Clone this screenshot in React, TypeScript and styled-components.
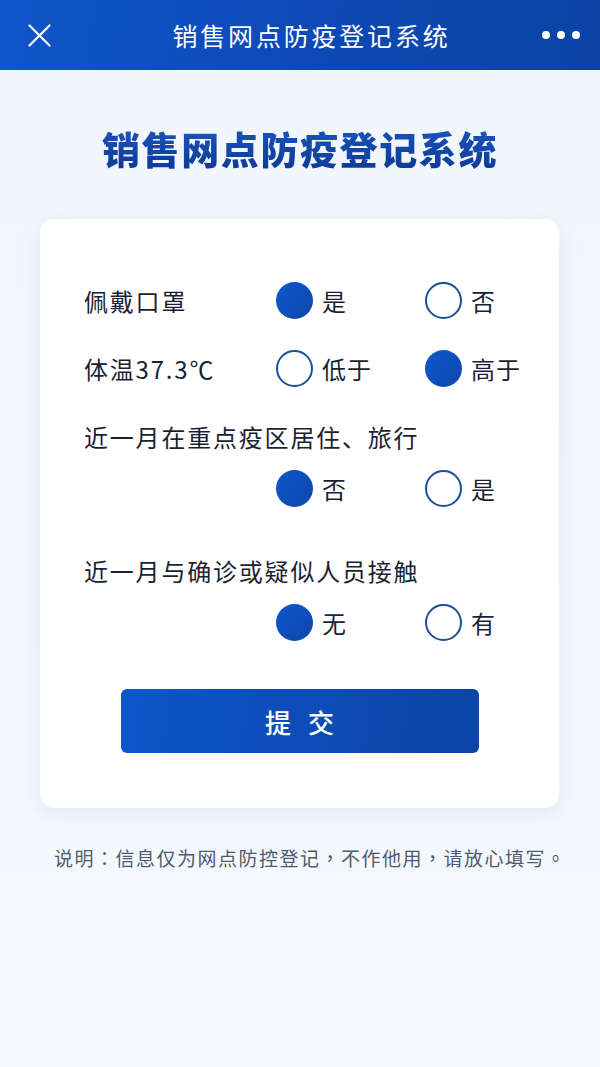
import React, { useState } from 'react';
import styled, { createGlobalStyle } from 'styled-components';

const GlobalStyle = createGlobalStyle`
  html, body {
    margin: 0;
    padding: 0;
    background: #f3f8fd;
  }
  body {
    font-family: "Noto Sans CJK SC", "Noto Sans", sans-serif;
  }
`;

const Page = styled.div`
  min-height: 1067px;
  background: linear-gradient(180deg, #f1f6fd 0%, #f5f9fe 100%);
  display: flex;
  flex-direction: column;
`;

const NavBar = styled.header`
  height: 70px;
  display: grid;
  grid-template-columns: 60px 1fr 60px;
  align-items: center;
  padding: 0 20px 0 27px;
  background: linear-gradient(100deg, #0f56ca 0%, #0d4ab6 50%, #0c42a4 100%);
  color: #fff;
`;

const NavTitle = styled.h1`
  margin: 0;
  text-align: center;
  font-size: 25px;
  font-weight: 400;
  letter-spacing: 2.8px;
  padding-left: 16px;
`;

const CloseButton = styled.button`
  width: 24px;
  height: 24px;
  padding: 0;
  border: 0;
  background: none;
  display: flex;
  align-items: center;
  justify-content: center;
`;

const Dots = styled.div`
  display: flex;
  justify-content: flex-end;
  gap: 7px;
`;

const Dot = styled.span`
  width: 8px;
  height: 8px;
  border-radius: 50%;
  background: #fff;
`;

const Title = styled.h2`
  margin: 55px 0 48px;
  text-align: center;
  font-size: 38px;
  line-height: 46px;
  font-weight: 900;
  letter-spacing: 1.6px;
  background: linear-gradient(180deg, #1a55bd 0%, #0d3a95 100%);
  -webkit-background-clip: text;
  background-clip: text;
  color: transparent;
`;

const Card = styled.section`
  margin: 0 41px 0 40px;
  height: 589px;
  box-sizing: border-box;
  background: #fff;
  border-radius: 14px;
  box-shadow: 0 6px 22px rgba(25, 75, 160, 0.09);
  padding: 47px 0 0 44px;
  display: flex;
  flex-direction: column;
`;

const Row = styled.div`
  display: grid;
  grid-template-columns: 192px 149px 1fr;
  align-items: center;
  height: 68px;
`;

const Question = styled.div<{ $top?: number }>`
  margin-top: ${(p) => p.$top ?? 0}px;
  font-size: 24px;
  line-height: 34px;
  letter-spacing: 1.8px;
  color: #1b1f35;
`;

const Label = styled.div`
  font-size: 24px;
  letter-spacing: 1.8px;
  color: #1b1f35;
`;

const OptionRow = styled.div`
  display: grid;
  grid-template-columns: 192px 149px 1fr;
  align-items: center;
  height: 40px;
  margin-top: 14px;
`;

const Option = styled.label`
  display: flex;
  align-items: center;
  gap: 9px;
  font-size: 24px;
  letter-spacing: 1px;
  color: #1b1f35;
  cursor: pointer;
`;

const Circle = styled.span<{ $on: boolean }>`
  width: 37px;
  height: 37px;
  box-sizing: border-box;
  border-radius: 50%;
  flex-shrink: 0;
  border: ${(p) => (p.$on ? '0' : '2px solid #1d4f98')};
  background: ${(p) => (p.$on ? 'linear-gradient(135deg, #0f58cc 0%, #0c46ab 100%)' : '#fff')};
`;

const Submit = styled.button`
  align-self: center;
  margin: 47px 0 0 -44px;
  width: 358px;
  height: 64px;
  border: 0;
  border-radius: 6px;
  background: linear-gradient(100deg, #0d56ca 0%, #0d4cb8 50%, #0c44a6 100%);
  color: #fff;
  font-family: "Noto Sans CJK SC", sans-serif;
  font-size: 26px;
  font-weight: 500;
  letter-spacing: 17px;
  text-indent: 17px;
  cursor: pointer;
`;

const Note = styled.p`
  margin: 36px 0 0 54px;
  font-family: "Noto Sans CJK TC", "Noto Sans CJK SC", sans-serif;
  font-size: 19px;
  line-height: 28px;
  letter-spacing: 1.5px;
  color: #4b5a70;
`;

type Choice = { a: string; b: string };

const questions: { key: string; label: string; opts: Choice; inline: boolean }[] = [
  { key: 'mask', label: '佩戴口罩', opts: { a: '是', b: '否' }, inline: true },
  { key: 'temp', label: '体温37.3℃', opts: { a: '低于', b: '高于' }, inline: true },
  { key: 'travel', label: '近一月在重点疫区居住、旅行', opts: { a: '否', b: '是' }, inline: false },
  { key: 'contact', label: '近一月与确诊或疑似人员接触', opts: { a: '无', b: '有' }, inline: false },
];

const CloseIcon = () => (
  <svg width="23" height="23" viewBox="0 0 23 23">
    <path d="M1.5 1.5 L21.5 21.5 M21.5 1.5 L1.5 21.5" stroke="#fff" strokeWidth="2.2" strokeLinecap="round" />
  </svg>
);

const App = () => {
  const [values, setValues] = useState<{ [key: string]: 'a' | 'b' }>({
    mask: 'a',
    temp: 'b',
    travel: 'a',
    contact: 'a',
  });

  const pick = (key: string, v: 'a' | 'b') => setValues({ ...values, [key]: v });

  const renderOptions = (key: string, opts: Choice) => (
    <>
      <Option onClick={() => pick(key, 'a')}>
        <Circle $on={values[key] === 'a'} />
        {opts.a}
      </Option>
      <Option onClick={() => pick(key, 'b')}>
        <Circle $on={values[key] === 'b'} />
        {opts.b}
      </Option>
    </>
  );

  return (
    <Page>
      <GlobalStyle />
      <NavBar>
        <CloseButton aria-label="关闭">
          <CloseIcon />
        </CloseButton>
        <NavTitle>销售网点防疫登记系统</NavTitle>
        <Dots>
          <Dot />
          <Dot />
          <Dot />
        </Dots>
      </NavBar>
      <Title>销售网点防疫登记系统</Title>
      <Card>
        {questions.map((q, i) => (q.inline ? (
          <Row key={q.key}>
            <Label>{q.label}</Label>
            {renderOptions(q.key, q.opts)}
          </Row>
        ) : (
          <div key={q.key}>
            <Question $top={i === 2 ? 18 : 46}>{q.label}</Question>
            <OptionRow>
              <span />
              {renderOptions(q.key, q.opts)}
            </OptionRow>
          </div>
        )))}
        <Submit type="button">提交</Submit>
      </Card>
      <Note>说明：信息仅为网点防控登记，不作他用，请放心填写。</Note>
    </Page>
  );
};

export default App;
